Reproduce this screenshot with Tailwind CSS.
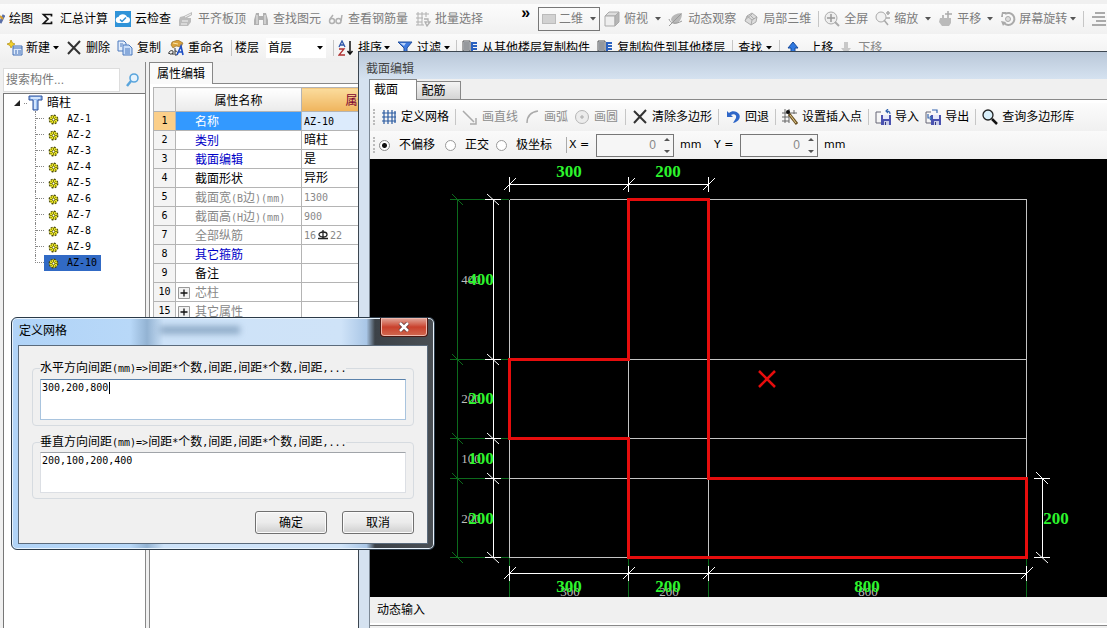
<!DOCTYPE html>
<html lang="zh-CN">
<head>
  <meta charset="UTF-8" />
  <meta name="viewport" content="width=device-width, initial-scale=1.0" />
  <title>截面编辑</title>
  <script src="https://cdn.jsdelivr.net/npm/@tailwindcss/browser@4"></script>
</head>
<body class="relative flex h-screen flex-col overflow-hidden bg-[#f0f0f0] pt-1 font-['Liberation_Sans','Noto_Sans_CJK_SC',sans-serif] text-xs leading-4 text-black">

  <!-- Shared icons -->
  <svg class="hidden">
    <symbol id="caret" viewBox="0 0 6 4"><path d="M0 0h6L3 3.5z" fill="currentColor" /></symbol>
    <symbol id="cross" viewBox="0 0 16 16"><path d="M2 2l12 12M14 1L2 14" stroke="#333" stroke-width="2" fill="none" /></symbol>
    <symbol id="gear" viewBox="0 0 12 12">
      <circle cx="6" cy="6" r="4.6" fill="#e8e020" stroke="#4a4a10" stroke-width="1.6" stroke-dasharray="2 1.6" />
      <circle cx="6" cy="6" r="3.6" fill="#f2ee2a" />
      <path d="M6 2v8M2 6h8M3.5 3.5l5 5M8.5 3.5l-5 5" stroke="#55550a" stroke-width=".8" />
      <circle cx="6" cy="6" r="1" fill="#fff" />
    </symbol>
    <symbol id="copyfloor" viewBox="0 0 16 16">
      <path d="M1 1h7v10H1z" fill="#e8eef6" stroke="#555" />
      <path d="M2 3h5M2 5h5M2 7h5M2 9h5" stroke="#444" />
      <path d="M10 3h5M10 6h5M10 9h5M10 2v10" stroke="#2b62c0" stroke-width="2" />
    </symbol>
    <symbol id="disk" viewBox="0 0 16 16">
      <path d="M1 3V14h5M1 3h5" fill="none" stroke="#667" />
      <path d="M6 6h10v10H6z" fill="#4a52b0" />
      <path d="M8 6h6v4H8z" fill="#e6e9fa" />
      <path d="M9 12h5v4H9z" fill="#c8cce8" />
      <path d="M10 13h1v3h-1z" fill="#333a80" />
    </symbol>
  </svg>

  <!-- View toolbar -->
  <div class="flex h-[30px] shrink-0 items-center gap-[7px] bg-linear-to-b from-[#fcfcfc] to-[#f1f1f1] whitespace-nowrap *:shrink-0 [&_svg]:shrink-0">
    <button class="flex items-center gap-1">
      <svg class="h-4 w-[5px]" viewBox="0 0 5 16"><path d="M0 12l4-8" stroke="#5a6fa8" stroke-width="3" /><path d="M0 5l3 3" stroke="#d8a030" stroke-width="2" /></svg>绘图
    </button>
    <button class="flex items-center gap-[6px]">
      <svg class="h-4 w-[14px]" viewBox="0 0 14 16"><path d="M11.500 5.500V3.500H3.500L8 8L3.500 12.500H11.500V10.500" fill="none" stroke="#111" stroke-width="1.700" /></svg>汇总计算
    </button>
    <button class="flex items-center gap-1">
      <svg class="size-4" viewBox="0 0 16 16"><path d="M0 0h16v16H0z" fill="#2f93d8" /><path d="M4 12a3 3 0 0 1-.5-6 4.500 4 0 0 1 8.500 0 3 3 0 0 1 0 6z" fill="#fff" /><path d="M5 8.500l2 2 4-4" stroke="#2f93d8" stroke-width="1.500" fill="none" /></svg>云检查
    </button>
    <button class="flex items-center gap-1 text-[#7c7c7c]">
      <svg class="size-4" viewBox="0 0 16 16"><path d="M2 6l4-1 8-4v3L9 7h4v4l-3 4H1V9z" fill="#bcbcbc" /><path d="M4 10h6M3 13h6M7 6l6-3" stroke="#f4f4f4" /></svg>平齐板顶
    </button>
    <button class="flex items-center gap-1 text-[#7c7c7c]">
      <svg class="size-4" viewBox="0 0 16 16"><path d="M3 2h3v3h4V2h3l2 7v5h-5V9H6v5H1V9z" fill="#b0b0b0" /><path d="M4 4v9M12 4v9" stroke="#eee" /></svg>查找图元
    </button>
    <button class="flex items-center gap-1 text-[#7c7c7c]">
      <svg class="size-4" viewBox="0 0 16 16" fill="none" stroke="#b0b0b0" stroke-width="1.500"><circle cx="4" cy="10" r="2.500" /><circle cx="10.500" cy="10" r="2.500" /><path d="M2 8l3-4M13 10l1-6" /></svg>查看钢筋量
    </button>
    <button class="flex items-center gap-1 text-[#7c7c7c]">
      <svg class="size-4" viewBox="0 0 16 16" fill="none" stroke="#b0b0b0"><path d="M1 3h13M1 7h7M1 11h6M3 1v13M7 1v13M11 1v5M1 14h8" /><path d="M9 8h4v3h2l-3 4-2-4h2" stroke-width="1.300" /></svg>批量选择
    </button>
    <button class="-mt-3 ml-[30px] w-[11px] text-center text-base font-bold">»</button>
    <label class="relative flex h-6 w-[62px] items-center border border-[#777]" aria-label="视图">
      <span class="ml-[3px] h-[10px] w-[14px] border border-[#bbb] bg-[#d2d2d2]"></span>
      <select class="absolute inset-0 appearance-none pl-[20px] text-[#7c7c7c]" aria-label="视图"><option>二维</option></select>
      <svg class="absolute right-[3px] h-1 w-[6px] text-[#555]"><use href="#caret" /></svg>
    </label>
    <button class="-ml-[3px] flex items-center gap-1 text-[#7c7c7c]">
      <svg class="size-4" viewBox="0 0 16 16"><path d="M1 5l4-4h10l-4 4z" fill="#ddd" stroke="#aaa" /><path d="M1 5h10v10H1z" fill="#eee" stroke="#aaa" /><path d="M11 5l4-4v10l-4 4z" fill="#b5b5b5" stroke="#aaa" /></svg>俯视
      <svg class="ml-[3px] h-1 w-[6px] text-[#555]"><use href="#caret" /></svg>
    </button>
    <button class="flex items-center gap-1 text-[#7c7c7c]">
      <svg class="size-4" viewBox="0 0 16 16"><path d="M3 9c0-4 5-7 11-7 0 6-3 11-8 11z" fill="#b8b8b8" /><path d="M1 15L13 3M1 8c1 4 6 6 13 2" stroke="#999" fill="none" /></svg>动态观察
    </button>
    <button class="flex items-center gap-1 text-[#7c7c7c]">
      <svg class="size-4" viewBox="0 0 16 16"><path d="M4 5l5-3 5 4-1 5-5 3-6-4z" fill="#dcdcdc" stroke="#aaa" /><path d="M4 5l5 4 5-3M9 9l-1 5M6 3l5 5M2 9l7-6" stroke="#aaa" fill="none" /></svg>局部三维
    </button>
    <span class="h-4 w-px bg-[#c6c6c6]"></span>
    <button class="-ml-[2px] flex items-center gap-1 text-[#7c7c7c]">
      <svg class="size-4" viewBox="0 0 16 16"><circle cx="7" cy="7" r="6" fill="#eee" stroke="#aaa" /><path d="M7 3v8M3 7h8" stroke="#999" stroke-width="1.500" /><path d="M11 11l4 4" stroke="#aaa" stroke-width="2" /></svg>全屏
    </button>
    <button class="flex items-center gap-[3px] text-[#7c7c7c]">
      <svg class="size-4" viewBox="0 0 16 16"><circle cx="6" cy="6" r="5" fill="#f2f2f2" stroke="#aaa" /><path d="M9 9l4 5M11 2h4M13 0v4M11 7h4" stroke="#aaa" stroke-width="1.600" /></svg>缩放
      <svg class="ml-1 h-1 w-[6px] text-[#555]"><use href="#caret" /></svg>
    </button>
    <button class="flex items-center gap-[3px] text-[#7c7c7c]">
      <svg class="size-4" viewBox="0 0 16 16"><path d="M2 7h2V4h2v3h7v5l-2 3H4l-3-4z" fill="#bbb" /><path d="M10 0v7M7 3h7" stroke="#aaa" stroke-width="1.500" /></svg>平移
      <svg class="ml-[3px] h-1 w-[6px] text-[#555]"><use href="#caret" /></svg>
    </button>
    <button class="flex items-center gap-[3px] text-[#7c7c7c]">
      <svg class="size-4" viewBox="0 0 16 16"><path d="M2 1h4v2H3v3H1z" fill="#aaa" /><path d="M5 3a6 6 0 1 1-1 9" fill="none" stroke="#aaa" stroke-width="2" /><circle cx="8" cy="8" r="2.500" fill="#ddd" stroke="#aaa" /><path d="M1 10l5 1-3 4z" fill="#aaa" /></svg>屏幕旋转
      <svg class="h-1 w-[6px] text-[#555]"><use href="#caret" /></svg>
    </button>
    <span class="h-4 w-px bg-[#c6c6c6]"></span>
    <button aria-label="更多">
      <svg class="size-4" viewBox="0 0 16 16"><path d="M4 2h10M1 6h13M5 10h10M1 14h14" stroke="#aaa" stroke-width="2" /></svg>
    </button>
  </div>

  <!-- Component toolbar -->
  <div class="flex h-7 shrink-0 items-center gap-[7px] bg-linear-to-b from-[#fbfbfb] to-[#efefef] pl-[7px] whitespace-nowrap *:shrink-0 [&_svg]:shrink-0">
    <button class="flex items-center gap-[3px]">
      <svg class="size-4" viewBox="0 0 16 16"><path d="M6 6h9v9H6z" fill="#dce9fb" stroke="#3f6db5" /><path d="M6 8h9M8 11h2M11 11h3M8 13h2M11 13h3" stroke="#3f6db5" /><path d="M4 0l1.500 3L8 4 5.500 5.500 4 8 3 5.500 0 4l3-1z" fill="#f3d329" stroke="#b08d10" stroke-width=".7" /></svg>新建
      <svg class="h-1 w-[6px]"><use href="#caret" /></svg>
    </button>
    <button class="flex items-center gap-1">
      <svg class="size-4"><use href="#cross" /></svg>删除
    </button>
    <button class="flex items-center gap-1">
      <svg class="size-4" viewBox="0 0 16 16" stroke="#4a78bd"><path d="M1 1h6l2 2v8H1z" fill="#e2edfb" /><path d="M6 5h6l3 3v7H6z" fill="#c9defa" /><path d="M3 4h3M3 6h2M8 9h5M8 11h5M8 13h5" /></svg>复制
    </button>
    <button class="flex items-center gap-1">
      <svg class="size-4" viewBox="0 0 16 16"><path d="M4 2l6-2 5 3-2 4-5-1-3 2-2-3z" fill="#d9a23c" stroke="#8a6420" stroke-width=".6" /><path d="M5 3l5 1" stroke="#fbe6a8" /><path d="M1 14c-1-3 3-4 4-3v4M1 13c1 2 3 1 4 0M7 8v7c3 1 4-4 0-4" stroke="#333" fill="none" /><path d="M9 15l4-9 2 9M11 12h4" stroke="#1f4fc4" stroke-width="1.600" fill="none" /></svg>重命名
    </button>
    <span class="h-4 w-px bg-[#c6c6c6]"></span>
    <label for="floor" class="-ml-1">楼层</label>
    <span class="relative flex items-center">
      <select id="floor" class="h-5 w-[60px] appearance-none bg-white pl-[2px] leading-4"><option>首层</option></select>
      <svg class="pointer-events-none absolute right-[3px] h-1 w-[6px]"><use href="#caret" /></svg>
    </span>
    <span class="h-4 w-px bg-[#c6c6c6]"></span>
    <button class="-ml-[3px] flex items-center gap-1">
      <svg class="size-4" viewBox="0 0 16 16" fill="none"><path d="M1 7l3-6 3 6M2 5h4" stroke="#2c55a8" stroke-width="1.300" /><path d="M1 9h5L1 15h6" stroke="#b03030" stroke-width="1.300" /><path d="M12 1v12M9.500 11l2.500 3 2.500-3" stroke="#111" stroke-width="1.500" /></svg>排序
      <svg class="-ml-[2px] h-1 w-[6px]"><use href="#caret" /></svg>
    </button>
    <button class="flex items-center gap-1">
      <svg class="size-4" viewBox="0 0 16 16"><path d="M1 2h14L10 8v6l-3-2V8z" fill="#3f7be0" stroke="#23509f" /><path d="M3 3h6L7 6z" fill="#b8d2fa" /></svg>过滤
      <svg class="-ml-px h-1 w-[6px]"><use href="#caret" /></svg>
    </button>
    <span class="-ml-px h-4 w-px bg-[#c6c6c6]"></span>
    <button class="-ml-[2px] flex items-center gap-1"><svg class="size-4"><use href="#copyfloor" /></svg>从其他楼层复制构件</button>
    <button class="flex items-center gap-1"><svg class="size-4"><use href="#copyfloor" /></svg>复制构件到其他楼层</button>
    <span class="h-4 w-px bg-[#c6c6c6]"></span>
    <button class="-ml-[2px] flex items-center gap-1">查找 <svg class="h-1 w-[6px]"><use href="#caret" /></svg></button>
    <span class="h-4 w-px bg-[#c6c6c6]"></span>
    <button class="-ml-[2px] flex items-center gap-2">
      <svg class="size-4" viewBox="0 0 16 16"><path d="M8 2l5 6h-3v6H6V8H3z" fill="#2f78e0" stroke="#174a9c" /></svg>上移
    </button>
    <button class="-ml-[2px] flex items-center gap-1 text-[#888]">
      <svg class="size-4" viewBox="0 0 16 16"><path d="M8 14L3 8h3V2h4v6h3z" fill="#c8c8c8" /></svg>下移
    </button>
  </div>

  <!-- Component list and properties -->
  <main class="flex min-h-0 flex-1">
    <aside class="flex w-[146px] shrink-0 flex-col border-r border-[#888] pt-[6px] pl-[3px]">
      <div class="flex h-6 items-center">
        <input type="text" aria-label="搜索构件" placeholder="搜索构件..." class="h-6 w-[117px] border border-[#ddd] bg-white px-[2px] placeholder:text-[#777]" />
        <button aria-label="搜索" class="flex flex-1 justify-center">
          <svg class="size-4" viewBox="0 0 16 16"><circle cx="9" cy="6" r="4" fill="#e6f3fd" stroke="#5aa5dc" stroke-width="1.600" /><path d="M6 9l-4 5" stroke="#5aa5dc" stroke-width="2.500" /></svg>
        </button>
      </div>
      <div class="mt-px flex-1 border-t border-l border-[#777] bg-white pt-px">
        <div class="flex h-4 items-center pl-[9px]">
          <svg class="size-2" viewBox="0 0 8 8"><path d="M7 1v6H1z" fill="#222" /></svg>
          <span class="ml-[3px] w-[3px] border-t border-dotted border-[#888]"></span>
          <svg class="ml-px size-4" viewBox="0 0 16 16"><path d="M1 1h13v4h-4v10H5V5H1z" fill="#9cc0f2" stroke="#2a4f9a" /><path d="M3 3h9M7 5v9" stroke="#e6f1ff" stroke-width="1.500" /></svg>
          <span class="ml-[3px]">暗柱</span>
        </div>
        <ul class="ml-[31px] font-['DejaVu_Sans_Mono',monospace] text-[10px]" id="tree"></ul>
      </div>
    </aside>

    <section class="ml-[3px] flex min-w-0 flex-1 flex-col border-l border-[#888]">
      <div class="flex h-[22px] shrink-0">
        <button class="w-[63px] border-t border-r border-[#888] bg-[#fafafa] text-center leading-5">属性编辑</button>
        <span class="flex-1 border-b border-[#888]"></span>
      </div>
      <div class="min-h-0 flex-1 overflow-hidden bg-white pt-[3px] pl-[3px]">
        <table class="w-[273px] table-fixed border-collapse border border-[#b4b4b4]">
          <colgroup><col class="w-[22px]" /><col class="w-[126px]" /><col /></colgroup>
          <thead>
            <tr class="h-6">
              <th class="border border-[#b4b4b4] bg-[#f1f1f1]"></th>
              <th class="border border-[#b4b4b4] bg-linear-to-b from-white to-[#eaeaea] pt-[2px] font-normal">属性名称</th>
              <th class="border border-[#b4b4b4] bg-linear-to-b from-[#fbdc9c] to-[#efb45c] pt-[2px] font-normal text-[#7a0030]">属性值</th>
            </tr>
          </thead>
          <tbody id="props"></tbody>
        </table>
      </div>
    </section>
  </main>

  <!-- Section editor window -->
  <section class="absolute top-[51px] right-0 bottom-0 left-[358px] flex flex-col border-t border-l border-[#3c4650] bg-[#d5e2f0]">
    <h1 class="h-[27px] shrink-0 bg-linear-to-b from-[#bac8d9] to-[#d5e2f0] pt-[9px] pl-[7px] text-[#444]">截面编辑</h1>
    <div class="ml-[10px] flex min-h-0 flex-1 flex-col border-l border-[#7c8894] bg-[#f0f0f0]">
      <div class="flex h-[21px] shrink-0 items-end">
        <button class="h-[21px] w-[47px] border-t border-r border-[#888] bg-white pr-[14px]">截面</button>
        <button class="h-[19px] w-[44px] border-t border-r border-b border-[#888] bg-linear-to-b from-[#f4f4f4] to-[#d4d4d4] pr-[10px]">配筋</button>
        <span class="flex-1 self-stretch border-b border-[#888]"></span>
      </div>

      <div class="flex h-[31px] shrink-0 items-center gap-[6px] border-t-3 border-white bg-linear-to-b from-[#fcfcfc] to-[#f0f0f0] pl-[3px] whitespace-nowrap *:shrink-0 [&_svg]:shrink-0">
        <span class="h-4 w-px border-l-2 border-dotted border-[#bbb]"></span>
        <button class="flex items-center gap-1">
          <svg class="size-4" viewBox="0 0 16 16"><path d="M1 4h14M1 8h14M1 12h14M3 1v14M7 1v14M11 1v14M14 2v12" stroke="#2a5aa0" stroke-width="1.200" /></svg>定义网格
        </button>
        <span class="h-4 w-px bg-[#c6c6c6]"></span>
        <button class="flex items-center gap-1 text-[#8c8c8c]">
          <svg class="size-4" viewBox="0 0 16 16"><path d="M1 2l11 11M14 9v6H8" fill="none" stroke="#aaa" stroke-width="1.500" /></svg>画直线
        </button>
        <button class="flex items-center gap-1 text-[#8c8c8c]">
          <svg class="size-4" viewBox="0 0 16 16"><path d="M3 14C3 7 7 3 14 2" fill="none" stroke="#aaa" stroke-width="1.500" /></svg>画弧
        </button>
        <button class="flex items-center gap-1 text-[#8c8c8c]">
          <svg class="size-4" viewBox="0 0 16 16"><circle cx="8" cy="8" r="6.500" fill="#ececec" stroke="#b5b5b5" /><path d="M8 6v4M6 8h4" stroke="#aaa" /></svg>画圆
        </button>
        <span class="ml-px h-4 w-px bg-[#c6c6c6]"></span>
        <button class="flex items-center gap-1"><svg class="size-4"><use href="#cross" /></svg>清除多边形</button>
        <span class="h-4 w-px bg-[#c6c6c6]"></span>
        <button class="flex items-center gap-1">
          <svg class="size-4" viewBox="0 0 16 16"><path d="M2 2v6h6L6 6c3-2 6 0 5 3l-3 5c6-1 8-6 6-9S7 1 4 4z" fill="#2f67c8" /></svg>回退
        </button>
        <span class="h-4 w-px bg-[#c6c6c6]"></span>
        <button class="flex items-center gap-1">
          <svg class="size-4" viewBox="0 0 16 16"><path d="M0 4h15M0 8h7M0 12h7M3 0v14M7 0v14M12 1v4" stroke="#666" /><path d="M7 5l8 10" stroke="#6d5426" stroke-width="3" /><path d="M8 6l6 8" stroke="#e8cf8c" /><circle cx="6" cy="3" r="2" fill="#111" /></svg>设置插入点
        </button>
        <span class="h-4 w-px bg-[#c6c6c6]"></span>
        <button class="flex items-center gap-1">
          <svg class="size-4" viewBox="0 0 16 16"><use href="#disk" /><path d="M15 5c0-3-2-3-4-3M13 0l-2 2 2 2" fill="none" stroke="#3465b0" stroke-width="1.200" /></svg>导入
        </button>
        <button class="flex items-center gap-1">
          <svg class="size-4" viewBox="0 0 16 16"><use href="#disk" /><path d="M3 5v4h4M5 7l2 2-2 2M7 1h5v3" fill="none" stroke="#3465b0" stroke-width="1.200" /></svg>导出
        </button>
        <span class="h-4 w-px bg-[#c6c6c6]"></span>
        <button class="flex items-center gap-1">
          <svg class="size-4" viewBox="0 0 16 16"><circle cx="6" cy="6" r="5" fill="#d9effa" stroke="#222" stroke-width="1.300" /><path d="M10 10l5 5" stroke="#111" stroke-width="2.500" /></svg>查询多边形库
        </button>
      </div>

      <div class="flex h-7 shrink-0 items-center bg-linear-to-b from-[#fafafa] to-[#f0f0f0] pl-[3px] whitespace-nowrap">
        <span class="mr-1 h-4 w-px border-l-2 border-dotted border-[#bbb]"></span>
        <label class="mr-[10px] flex items-center gap-[9px]"><input type="radio" name="offset" checked class="size-[11px] appearance-none rounded-full border border-[#888] bg-white checked:bg-[radial-gradient(circle,#111_2px,#fff_3px)]" />不偏移</label>
        <label class="mr-[7px] flex items-center gap-[9px]"><input type="radio" name="offset" class="size-[11px] appearance-none rounded-full border border-[#999] bg-white" />正交</label>
        <label class="mr-[14px] flex items-center gap-[9px]"><input type="radio" name="offset" class="size-[11px] appearance-none rounded-full border border-[#999] bg-white" />极坐标</label>
        <span class="mr-[2px] h-4 w-px bg-[#aaa]"></span>
        <label for="dx" class="w-[27px] font-['DejaVu_Sans',sans-serif] text-[11px]">X =</label>
        <span class="relative">
          <input id="dx" type="text" value="0" class="h-[23px] w-[78px] border border-[#777] bg-[#f6f6f6] pr-[17px] text-right text-[#888]" />
          <svg class="absolute top-1 right-1 h-4 w-[6px]" viewBox="0 0 6 16"><path d="M0 3h6L3 0zM0 12h6l-3 3z" fill="#555" /></svg>
        </span>
        <span class="ml-[6px] w-[34px] font-['DejaVu_Sans',sans-serif] text-[11px]">mm</span>
        <label for="dy" class="w-[26px] font-['DejaVu_Sans',sans-serif] text-[11px]">Y =</label>
        <span class="relative">
          <input id="dy" type="text" value="0" class="h-[23px] w-[78px] border border-[#777] bg-[#f6f6f6] pr-[17px] text-right text-[#888]" />
          <svg class="absolute top-1 right-1 h-4 w-[6px]" viewBox="0 0 6 16"><path d="M0 3h6L3 0zM0 12h6l-3 3z" fill="#555" /></svg>
        </span>
        <span class="ml-[6px] font-['DejaVu_Sans',sans-serif] text-[11px]">mm</span>
      </div>

      <!-- Drawing -->
      <div class="min-h-0 flex-1 overflow-hidden bg-black">
        <svg class="h-full w-full" fill="none">
          <path stroke="#0c6a1c" shape-rendering="crispEdges" d="M87.500 40.500V398.500M80 40.500H139M80 200.500H139M80 279.500H139M80 319.500H139M80 398.500H139M139.500 398V438M258.500 398V438M338.500 398V438M656.500 398V438" />
          <path stroke="#0c6a1c" d="M82 35l11 11M82 195l11 11M82 274l11 11M82 314l11 11M82 393l11 11" />
          <path stroke="#c4c4c4" shape-rendering="crispEdges" d="M139.500 40.500H656.500M139.500 200.500H656.500M139.500 279.500H656.500M139.500 319.500H656.500M139.500 398.500H656.500M139.500 40.500V398.500M258.500 40.500V398.500M338.500 40.500V398.500M656.500 40.500V398.500" />
          <g stroke="#fff">
            <path shape-rendering="crispEdges" d="M139.500 25.500H338.500M139.500 18V33M258.500 18V33M338.500 18V33M123.500 40.500V398.500M115 40.500H131M115 200.500H131M115 279.500H131M115 319.500H131M115 398.500H131M139.500 414.500H656.500M139.500 407V422M258.500 407V422M338.500 407V422M656.500 407V422M672.500 319.500V398.500M664 319.500H680M664 398.500H680" />
            <path d="M134 31l12-12M253 31l12-12M333 31l12-12M117 35l12 11M117 195l12 11M117 274l12 11M117 314l12 11M117 393l12 11M134 420l12-12M253 420l12-12M333 420l12-12M651 420l12-12M666 313l12 12M666 393l12 11" />
          </g>
          <path stroke="#e60d0d" stroke-width="3" shape-rendering="crispEdges" d="M258.500 40.500H338.500V319.500H656.500V398.500H258.500V279.500H139.500V200.500H258.500z" />
          <path stroke="#e60d0d" stroke-width="2.500" d="M389 212l16 16M405 212l-16 16" />
          <g fill="#bdbdbd" text-anchor="middle" class="font-['Liberation_Serif',serif] text-[13px]">
            <text x="101" y="125">400</text><text x="101" y="244">200</text><text x="101" y="304">100</text><text x="101" y="364">200</text>
            <text x="200" y="437">300</text><text x="299" y="437">200</text><text x="498" y="437">800</text>
          </g>
          <g fill="#2df52d" text-anchor="middle" class="font-['Liberation_Serif',serif] text-[17px] font-bold">
            <text x="199" y="18">300</text><text x="298" y="18">200</text>
            <text x="111" y="126">400</text><text x="111" y="245">200</text><text x="111" y="305">100</text><text x="111" y="365">200</text>
            <text x="686" y="365">200</text>
            <text x="199" y="433">300</text><text x="298" y="433">200</text><text x="497" y="433">800</text>
          </g>
        </svg>
      </div>
      <div class="flex h-7 shrink-0 items-center border-b-2 border-white pl-[7px]">
        <button>动态输入</button>
      </div>
      <div class="h-[3px] shrink-0 border-t border-[#888]"></div>
    </div>
  </section>

  <!-- Grid definition dialog -->
  <form role="dialog" aria-label="定义网格" class="absolute top-[317px] left-[11px] w-[424px] rounded-md border border-[#2b3a48] bg-[linear-gradient(to_right,#b0d3f7_0%,#b8d8f8_28%,#93b3d3_32%,#cde2f8_36%,#cfe3f8_78%,#a9c6e6_84%,#3c4248_86%,#4a4f54_100%)] px-[6px] pb-[5px] shadow-[inset_0_0_0_1px_#e8f3fd]">
    <span class="absolute top-2 left-[148px] h-2 w-20 bg-[#4f7397]/50 blur-[3px]"></span>
    <div class="relative flex h-[27px] items-start justify-between">
      <h2 class="pt-[5px] pl-px">定义网格</h2>
      <button type="button" aria-label="关闭" class="flex h-[19px] w-12 items-center justify-center rounded-b-sm border border-t-0 border-[#4a1812] bg-linear-to-b from-[#e0a79c] via-[#c9402c] via-50% to-[#d06850] shadow-[inset_0_0_0_1px_#f0b8ac]">
        <svg class="h-[10px] w-3" viewBox="0 0 12 10"><path d="M2 1l8 8M10 1L2 9" stroke="#5a3030" stroke-width="4" /><path d="M2 1l8 8M10 1L2 9" stroke="#fff" stroke-width="2.500" /></svg>
      </button>
    </div>
    <div class="relative border border-[#5b6b7c] bg-[#f0f0f0] px-[13px] pt-[14px] pb-[9px]">
      <fieldset class="rounded-sm border border-[#d6dbe0] px-[7px] pb-[5px]">
        <legend class="leading-4"><label for="hgrid">水平方向间距<span class="font-['DejaVu_Sans_Mono',monospace] text-[10px]">(mm)=&gt;</span>间距<span class="font-['DejaVu_Sans_Mono',monospace] text-[10px]">*</span>个数<span class="font-['DejaVu_Sans_Mono',monospace] text-[10px]">,</span>间距<span class="font-['DejaVu_Sans_Mono',monospace] text-[10px]">,</span>间距<span class="font-['DejaVu_Sans_Mono',monospace] text-[10px]">*</span>个数<span class="font-['DejaVu_Sans_Mono',monospace] text-[10px]">,</span>间距<span class="font-['DejaVu_Sans_Mono',monospace] text-[10px]">,...</span></label></legend>
        <div class="relative mt-[2px] flex">
          <textarea id="hgrid" class="h-[41px] w-full resize-none border border-[#a9c4de] border-t-[#5b82ab] bg-white px-[1px] font-['DejaVu_Sans_Mono',monospace] text-[10px] leading-4">300,200,800</textarea>
          <span class="absolute top-[3px] left-[69px] h-3 w-px bg-black"></span>
        </div>
      </fieldset>
      <fieldset class="mt-2 rounded-sm border border-[#d6dbe0] px-[7px] pb-[5px]">
        <legend class="leading-4"><label for="vgrid">垂直方向间距<span class="font-['DejaVu_Sans_Mono',monospace] text-[10px]">(mm)=&gt;</span>间距<span class="font-['DejaVu_Sans_Mono',monospace] text-[10px]">*</span>个数<span class="font-['DejaVu_Sans_Mono',monospace] text-[10px]">,</span>间距<span class="font-['DejaVu_Sans_Mono',monospace] text-[10px]">,</span>间距<span class="font-['DejaVu_Sans_Mono',monospace] text-[10px]">*</span>个数<span class="font-['DejaVu_Sans_Mono',monospace] text-[10px]">,</span>间距<span class="font-['DejaVu_Sans_Mono',monospace] text-[10px]">,...</span></label></legend>
        <div class="relative mt-px flex">
          <textarea id="vgrid" class="h-[41px] w-full resize-none border border-[#dcdfe4] border-t-[#a0a4a9] bg-white px-[1px] font-['DejaVu_Sans_Mono',monospace] text-[10px] leading-4">200,100,200,400</textarea>
        </div>
      </fieldset>
      <div class="mt-3 flex justify-end gap-[15px]">
        <button type="submit" class="h-[23px] w-[72px] rounded-[3px] border border-[#707070] bg-linear-to-b from-[#f3f3f3] via-[#ebebeb] via-50% to-[#cfcfcf] shadow-[inset_0_0_0_1px_#fbfbfb]">确定</button>
        <button type="button" class="h-[23px] w-[72px] rounded-[3px] border border-[#707070] bg-linear-to-b from-[#f3f3f3] via-[#ebebeb] via-50% to-[#cfcfcf] shadow-[inset_0_0_0_1px_#fbfbfb]">取消</button>
      </div>
    </div>
  </form>

  <script>
    // Component tree
    const tree = document.getElementById('tree');
    for (let i = 1; i <= 10; i++) {
      const selected = i === 10;
      tree.innerHTML += `
        <li class="flex h-4 items-center">
          <span class="flex w-[9px] flex-col self-stretch ${selected ? '' : 'border-l border-dotted border-[#888]'}">
            <span class="h-2 border-b border-dotted border-[#888] ${selected ? 'border-l' : ''}"></span>
          </span>
          <span class="flex h-4 items-center gap-2 pr-1 pl-1 ${selected ? 'bg-[#316ac5]' : ''}">
            <svg class="size-[11px] shrink-0"><use href="#gear" /></svg>AZ-${i}
          </span>
        </li>`;
    }

    // Property rows: number, name, value, name colour
    const mono = `<span class="font-['DejaVu_Sans_Mono',monospace] text-[10px]">`;
    const rows = [
      [1, '名称', mono + 'AZ-10</span>', 'text-white'],
      [2, '类别', '暗柱', 'text-[#0000c8]'],
      [3, '截面编辑', '是', 'text-[#0000c8]'],
      [4, '截面形状', '异形', 'text-black'],
      [5, `截面宽${mono}(B</span>边${mono})(mm)</span>`, mono + '1300</span>', 'text-[#888]'],
      [6, `截面高${mono}(H</span>边${mono})(mm)</span>`, mono + '900</span>', 'text-[#888]'],
      [7, '全部纵筋', `${mono}16</span><svg class="mx-[2px] inline size-[10px] align-[-1px]" viewBox="0 0 10 10"><path d="M5 0v9M0 8.500h10" fill="none" stroke="#222" stroke-width="1.300" /><ellipse cx="5" cy="4.500" rx="4" ry="2.500" fill="none" stroke="#222" stroke-width="1.300" /></svg>${mono}22</span>`, 'text-[#888]'],
      [8, '其它箍筋', '', 'text-[#0000c8]'],
      [9, '备注', '', 'text-black'],
      [10, '芯柱', '', 'text-[#888]'],
      [15, '其它属性', '', 'text-[#888]'],
    ];
    document.getElementById('props').innerHTML = rows.map(([no, name, value, colour]) => `
      <tr class="h-[19px]">
        <td class="border border-[#b4b4b4] p-0 text-center font-['DejaVu_Sans_Mono',monospace] text-[10px] leading-4 ${no === 1 ? 'bg-[#fbcf8a]' : 'bg-[#f4f4f4]'}">${no}</td>
        <td class="border border-[#b4b4b4] p-0 ${no === 1 ? 'bg-[#3399ff]' : ''} ${colour}">
          <div class="flex h-[18px] items-center pt-[2px] pl-[2px]">
            <span class="mr-[5px] flex w-3 justify-center">${no >= 10 ? '<button aria-label="展开"><svg class="block size-3" viewBox="0 0 12 12"><path d="M.5.5h11v11H.5z" fill="#f2f2f2" stroke="#999" /><path d="M6 2.500v7M2.500 6h7" stroke="#111" stroke-width="1.300" /></svg></button>' : ''}</span>
            <span>${name}</span>
          </div>
        </td>
        <td class="border border-[#b4b4b4] py-0 pr-0 pl-[2px] leading-4 ${no === 1 ? 'bg-[#dcebfc]' : ''} ${no >= 5 ? 'text-[#888]' : ''}">${value}</td>
      </tr>`).join('');
  </script>
</body>
</html>
